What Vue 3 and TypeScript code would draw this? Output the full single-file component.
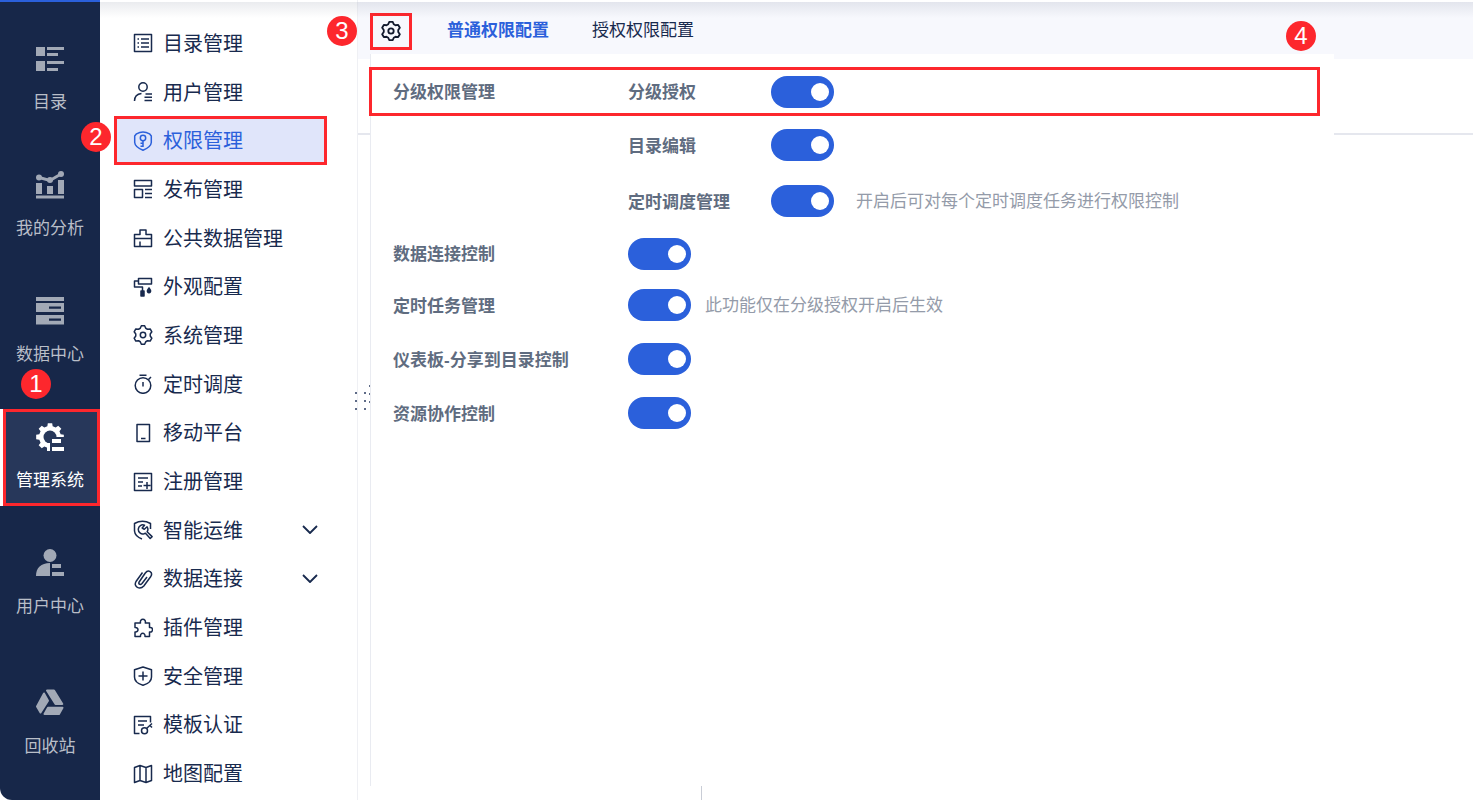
<script setup lang="ts">
import { ref } from 'vue'

interface RailItem {
  label: string
  icon: string
  active?: boolean
  badge?: number
}
interface MenuItem {
  label: string
  icon: string
  active?: boolean
  expandable?: boolean
}
interface Setting {
  id: string
  group: string
  label?: string
  hint?: string
  nested?: boolean
  marked?: boolean
}

/** Closed outline of a cog: every tooth has a flat top and a flat valley. */
function cog(c: number, teeth: number, outer: number, inner: number, top: number, base: number): string {
  const points: string[] = []
  const at = (r: number, deg: number) => {
    const a = ((deg - 90) * Math.PI) / 180
    points.push(`${(c + r * Math.cos(a)).toFixed(2)} ${(c + r * Math.sin(a)).toFixed(2)}`)
  }
  for (let i = 0; i < teeth; i++) {
    const mid = (360 / teeth) * i
    at(inner, mid - base)
    at(outer, mid - top)
    at(outer, mid + top)
    at(inner, mid + base)
  }
  return `M${points.join('L')}Z`
}

const hexCog = cog(10, 6, 9.4, 7.3, 10, 22)
const railCog = cog(14, 8, 14, 11, 9, 14)

const rail: RailItem[] = [
  { label: '目录', icon: 'catalog' },
  { label: '我的分析', icon: 'analysis' },
  { label: '数据中心', icon: 'data' },
  { label: '管理系统', icon: 'system', active: true, badge: 1 },
  { label: '用户中心', icon: 'user' },
  { label: '回收站', icon: 'recycle' },
]

const menu: MenuItem[] = [
  { label: '目录管理', icon: 'list' },
  { label: '用户管理', icon: 'user' },
  { label: '权限管理', icon: 'key', active: true },
  { label: '发布管理', icon: 'publish' },
  { label: '公共数据管理', icon: 'public' },
  { label: '外观配置', icon: 'paint' },
  { label: '系统管理', icon: 'cog' },
  { label: '定时调度', icon: 'timer' },
  { label: '移动平台', icon: 'mobile' },
  { label: '注册管理', icon: 'register' },
  { label: '智能运维', icon: 'ops', expandable: true },
  { label: '数据连接', icon: 'clip', expandable: true },
  { label: '插件管理', icon: 'plugin' },
  { label: '安全管理', icon: 'shield' },
  { label: '模板认证', icon: 'template' },
  { label: '地图配置', icon: 'map' },
]

const settings: Setting[] = [
  { id: 'grade', group: '分级权限管理', label: '分级授权', nested: true, marked: true },
  { id: 'edit', group: '', label: '目录编辑', nested: true },
  { id: 'schedule', group: '', label: '定时调度管理', nested: true, hint: '开启后可对每个定时调度任务进行权限控制' },
  { id: 'connection', group: '数据连接控制' },
  { id: 'task', group: '定时任务管理', hint: '此功能仅在分级授权开启后生效' },
  { id: 'share', group: '仪表板-分享到目录控制' },
  { id: 'collab', group: '资源协作控制' },
]

const enabled = ref<Record<string, boolean>>({
  grade: true,
  edit: true,
  schedule: true,
  connection: true,
  task: true,
  share: true,
  collab: true,
})

const tabs = ['普通权限配置', '授权权限配置']
const currentTab = ref(0)
</script>

<template>
  <div class="page">
    <nav class="rail">
      <a v-for="item in rail" :key="item.label" href="#" class="rail-item" :class="{ active: item.active }">
        <svg class="rail-icon" viewBox="0 0 28 28" fill="currentColor" aria-hidden="true">
          <g v-if="item.icon === 'catalog'">
            <path d="M0 2h9v9H0zM11 2h17v3H11zM11 8h11v3H11zM0 16h9v10H0zM11 16h17v3H11zM11 23h11v3H11z" />
          </g>
          <g v-else-if="item.icon === 'analysis'">
            <path d="M0 12h6v11H0zM11 15h6v8h-6zM22 9h6v14h-6zM0 24.500h28v3H0z" />
            <circle cx="3" cy="6.500" r="3" />
            <circle cx="14" cy="9" r="3" />
            <circle cx="25" cy="3" r="3" />
            <path d="M3 6.500l11 3 11-6.500" fill="none" stroke="currentColor" stroke-width="3" />
          </g>
          <g v-else-if="item.icon === 'data'">
            <path fill-rule="evenodd" d="M0 0h28v4H0zM0 6h28v9H0zM13 9.500v2.200h12V9.500zM0 18h28v9.500H0zM13 21.500v2.200h12v-2.200z" />
          </g>
          <g v-else-if="item.icon === 'system'">
            <path :d="railCog" />
            <circle class="rail-hole" cx="14" cy="14" r="6.500" />
            <path class="rail-hole" d="M14 14h14v14H14z" />
            <path d="M16 16h9v4h-9zM16 24h12v4H16zM11 20h3v8h-3z" />
          </g>
          <g v-else-if="item.icon === 'user'">
            <circle cx="14" cy="6.500" r="6.500" />
            <path d="M14 14v13H0C0 19 5 14 14 14zM16 15h9v4h-9zM16 23h12v4H16z" />
          </g>
          <g v-else stroke="currentColor" stroke-width="2" stroke-linejoin="round">
            <path d="M8 4.500l4 7.200-7.500 11.800L1 17.500z" />
            <path d="M11 1.500h7l8.300 13.500h-6.800z" />
            <path d="M12 18.800h14.500L23 25H8.500z" />
          </g>
        </svg>
        <span>{{ item.label }}</span>
        <b v-if="item.badge" class="badge badge-rail">{{ item.badge }}</b>
      </a>
    </nav>

    <aside class="side">
      <ul class="menu">
        <li v-for="item in menu" :key="item.label" class="menu-row">
          <a href="#" class="menu-item" :class="{ active: item.active }">
            <svg class="menu-icon" viewBox="0 0 20 20" aria-hidden="true">
              <g v-if="item.icon === 'list'">
                <path d="M1.500 1.500h17v17h-17zM8 6h8M8 10h8M8 14h8M4.500 6h1.500M4.500 10h1.500M4.500 14h1.500" />
              </g>
              <g v-else-if="item.icon === 'user'">
                <circle cx="10" cy="5" r="4.200" />
                <path d="M1.500 19c0-4.500 2.500-7 7-7.500M12.500 12H19M11.500 15.300H19M11.500 18.600H19" />
              </g>
              <g v-else-if="item.icon === 'key'">
                <path d="M3.500 2.800Q10-.8 16.500 2.800L18.300 5v6.500Q18 16 10 19.200 2 16 1.700 11.500V5z" />
                <circle cx="10" cy="7" r="2.700" />
                <path d="M10 9.700V16M10 12.300H7.500M10 15.300H7.500" />
              </g>
              <g v-else-if="item.icon === 'publish'">
                <path d="M1.500 1.500h17v5.500h-17zM1.500 10.500h8v8h-8zM12 10.500h7M12 14.500h7M12 18.500h7" />
              </g>
              <g v-else-if="item.icon === 'public'">
                <path d="M1.500 18.500V6.500H7V2h6v4.500h5.500v12zM1.500 10.500h17M7 13.500v5" />
              </g>
              <g v-else-if="item.icon === 'paint'">
                <path d="M5.500 1.500h13V7h-13zM5.500 4H1.500v6h8v4" />
                <path class="solid" d="M8 14h3v5H8zM16 11l1.500 2.500a1.600 1.600 0 1 1-3 0z" />
              </g>
              <g v-else-if="item.icon === 'cog'">
                <path :d="hexCog" />
                <circle cx="10" cy="10" r="2.700" />
              </g>
              <g v-else-if="item.icon === 'timer'">
                <circle cx="10" cy="11.500" r="7.800" />
                <path d="M6.500 1.200h7M10 8v4.500M15.500 5.500l2.500-2.500" />
              </g>
              <g v-else-if="item.icon === 'mobile'">
                <path d="M4 1.500h12.500v17H4zM8 15.500h4.500" />
              </g>
              <g v-else-if="item.icon === 'register'">
                <path d="M1.500 1.500h17v17h-17zM5 6h10M5 10h5M5 14h4M14 10v7M10.500 13.500h7" />
              </g>
              <g v-else-if="item.icon === 'ops'">
                <path d="M17.500 9V3.500Q9.500-1 1.500 3.500V11q.5 5.500 7.500 8" />
                <path d="M11.500 5.200a4.500 4.500 0 1 0-.5 8.500l1.500-.5 4.700 5.300 1.900-1.900-5-4.800a4.500 4.500 0 0 0 0-5L11.300 9.300 9.200 8z" />
              </g>
              <g v-else-if="item.icon === 'clip'">
                <path d="M14 8l-5 6.500c-2 2-4 .5-2.700-1.800l6-8.700c3-4 8-1 5.500 3.500l-7 9.500C7 21 0 18 3 12.500L9.500 3.500" />
              </g>
              <g v-else-if="item.icon === 'plugin'">
                <path d="M2 5h5.500c-1.200-5 6-5 4.800 0h4.200v4.500c4-1 4 5.500 0 4.500v4.500H12c.5-4.200-5-4.200-4.500 0H2v-4.500c4 .5 4-5 0-4.500z" />
              </g>
              <g v-else-if="item.icon === 'shield'">
                <path d="M10 1l8.500 2.800V11c0 4-4 7-8.500 8.300C5.500 18 1.500 15 1.500 11V3.800zM10 5.500v9M5.500 10h9" />
              </g>
              <g v-else-if="item.icon === 'template'">
                <path d="M6.500 18.500h-5v-17h16v6M5 6h9M5 10h6M13.800 13.200L19 8.500M17 10.500l2 2" />
                <circle cx="11.500" cy="15.800" r="3" />
              </g>
              <g v-else>
                <path d="M1.500 3.500l5.500-2 6 2 5.500-2v15l-5.500 2-6-2-5.500 2zM7 1.500v15M13 3.500v15" />
              </g>
            </svg>
            <span>{{ item.label }}</span>
            <svg v-if="item.expandable" class="chevron" viewBox="0 0 16 10" aria-hidden="true">
              <path d="M1 1l7 7 7-7" />
            </svg>
            <b v-if="item.active" class="badge badge-menu">2</b>
          </a>
        </li>
      </ul>
      <svg class="grip" viewBox="0 0 17 26" aria-hidden="true">
        <path d="M1 7h2v2H1zM10 7h2v2h-2zM1 15h2v2H1zM10 15h2v2h-2zM1 23h2v2H1zM10 23h2v2h-2zM15 0h1v2h-1zM15 8h1v2h-1zM15 16h1v2h-1z" />
      </svg>
    </aside>

    <main class="main">
      <div class="backdrop"></div>
      <section class="center">
        <header class="toolbar">
          <button type="button" class="gear" aria-label="设置">
            <svg class="gear-icon" viewBox="0 0 20 20" aria-hidden="true">
              <path :d="hexCog" />
              <circle cx="10" cy="10" r="2.700" />
            </svg>
            <b class="badge badge-gear">3</b>
          </button>
          <button
            v-for="(tab, i) in tabs"
            :key="tab"
            type="button"
            class="tab"
            :class="{ current: i === currentTab }"
            @click="currentTab = i"
          >{{ tab }}</button>
        </header>
        <form class="panel">
          <div
            v-for="s in settings"
            :key="s.id"
            class="setting"
            :class="{ nested: s.nested, marked: s.marked }"
          >
            <span v-if="s.nested" class="name">{{ s.group }}</span>
            <label class="name" :for="s.id">{{ s.label || s.group }}</label>
            <input :id="s.id" v-model="enabled[s.id]" class="switch" type="checkbox" role="switch" />
            <span v-if="s.hint" class="hint">{{ s.hint }}</span>
            <b v-if="s.marked" class="badge badge-row">4</b>
          </div>
        </form>
        <div class="splitter"></div>
      </section>
      <div class="backdrop"></div>
    </main>
  </div>
</template>

<style>
body {
  margin: 0;
  background: #fff;
}
</style>

<style scoped>
.page {
  box-sizing: border-box;
  position: relative;
  display: flex;
  min-height: 100vh;
  font-family: "Liberation Sans", "Noto Sans CJK SC", sans-serif;
  color: #182a4e;
}
.page::after {
  content: "";
  position: absolute;
  top: 2px;
  left: 100px;
  right: 0;
  height: 16px;
  background: linear-gradient(rgba(23, 39, 73, 0.09), rgba(23, 39, 73, 0));
  pointer-events: none;
}
a {
  color: inherit;
  text-decoration: none;
}
button {
  margin: 0;
  border: 0;
  padding: 0;
  background: none;
  font: inherit;
  color: inherit;
  cursor: pointer;
}
.badge {
  position: absolute;
  z-index: 2;
  width: 30px;
  height: 30px;
  border-radius: 50%;
  background: #fd272d;
  color: #fff;
  font-size: 24px;
  font-weight: 400;
  line-height: 30px;
  text-align: center;
}

.rail {
  box-sizing: border-box;
  flex: none;
  display: flex;
  flex-direction: column;
  gap: 29px;
  width: 100px;
  padding: 29px 0 28px;
  border-top: 2px solid #2b60db;
  border-bottom-left-radius: 12px;
  background: #172749;
}
.rail-item {
  box-sizing: border-box;
  position: relative;
  display: flex;
  flex-direction: column;
  align-items: center;
  gap: 16px;
  height: 97px;
  padding-top: 14px;
  color: #a2a9b6;
  font-size: 17px;
  line-height: 28px;
}
.rail-item span {
  color: #b9bec8;
}
.rail-item:last-child {
  margin-top: auto;
}
.rail-item.active {
  border-left: 3px solid #fff;
  padding-right: 3px;
  background: #27375a;
  box-shadow: inset 0 0 0 3px #fd272d;
  color: #fff;
}
.rail-item.active span {
  color: #fff;
}
.rail-icon {
  width: 28px;
  height: 28px;
  overflow: visible;
}
.rail-hole {
  fill: #27375a;
}
.badge-rail {
  top: -40px;
  left: 18px;
}

.side {
  box-sizing: border-box;
  position: relative;
  flex: none;
  display: flex;
  width: 258px;
  padding: 19px 30px 2px 14px;
  border-right: 1px solid #eff0f4;
}
.menu {
  flex: 1;
  display: flex;
  flex-direction: column;
  margin: 0;
  padding: 0;
  list-style: none;
}
.menu-row {
  flex: 1;
  display: flex;
  min-height: 48px;
}
.menu-item {
  position: relative;
  flex: 1;
  display: flex;
  align-items: center;
  gap: 10px;
  padding: 0 9px 0 19px;
  font-size: 20px;
  line-height: 30px;
}
.menu-item span {
  padding-top: 1px;
}
.menu-item.active {
  background: #e0e5fa;
  box-shadow: inset 0 0 0 3px #fd272d;
  color: #2b60db;
}
.menu-icon,
.gear-icon,
.chevron {
  fill: none;
  stroke: currentColor;
  stroke-width: 1.5;
  stroke-linejoin: round;
}
.menu-icon,
.gear-icon {
  width: 20px;
  height: 20px;
}
.gear-icon {
  stroke-width: 1.8;
}
.solid {
  fill: currentColor;
}
.chevron {
  width: 16px;
  height: 10px;
  margin-left: auto;
  stroke-width: 1.8;
}
.badge-menu {
  top: 6px;
  left: -33px;
}
.grip {
  position: absolute;
  z-index: 2;
  top: 385px;
  right: -14px;
  width: 17px;
  height: 26px;
  fill: #5e6b87;
}

.main {
  flex: 1;
  display: grid;
  grid-template-columns: 12px minmax(0, 1fr) 139px;
  margin-top: 2px;
}
.backdrop {
  background: linear-gradient(#f7f8fd, #f7f8fd) 0 0 / 100% 57px no-repeat,
    linear-gradient(#e5e7ee, #e5e7ee) 0 131px / 100% 2px no-repeat;
}
.center {
  display: flex;
  flex-direction: column;
}
.toolbar {
  display: flex;
  align-items: center;
  height: 52px;
  background: #f7f8fd;
  font-size: 17px;
  line-height: 26px;
}
.gear {
  position: relative;
  display: grid;
  place-items: center;
  width: 42px;
  height: 37px;
  margin-top: 6px;
  border: 3px solid #fd272d;
  color: #10182c;
}
.tab {
  margin-left: 43px;
  padding-top: 6px;
}
.gear + .tab {
  margin-left: 35px;
}
.tab.current {
  color: #2b60db;
  font-weight: 700;
}
.badge-gear {
  top: 0;
  left: -46px;
}
.panel {
  flex: 1;
  display: grid;
  grid-template-rows: 49px 58px 54px 51px 52px 56px 52px;
  align-content: start;
  border-left: 1px solid #e9ebf1;
  padding: 13px 14px 0 0;
}
.setting {
  position: relative;
  display: grid;
  grid-template-columns: 235px 63px 1fr;
  align-items: center;
  padding-left: 22px;
  color: #5f6c80;
  font-size: 17px;
  line-height: 26px;
}
.setting.nested {
  grid-template-columns: 235px 143px 63px 1fr;
}
.setting.marked {
  margin-left: -2px;
  padding-left: 24px;
  box-shadow: inset 0 0 0 3px #fd272d;
}
.name {
  padding-top: 3px;
  font-weight: 700;
}
.hint {
  padding-top: 2px;
  padding-left: 14px;
  color: #949ba9;
}
.nested .hint {
  padding-left: 22px;
}
.switch {
  appearance: none;
  box-sizing: border-box;
  display: flex;
  align-items: center;
  width: 63px;
  height: 32px;
  margin: 0;
  border-radius: 16px;
  padding: 0 5px;
  background: #c3c8d2;
  cursor: pointer;
}
.switch::before {
  content: "";
  width: 18px;
  height: 18px;
  border-radius: 50%;
  background: #fff;
}
.switch:checked {
  justify-content: flex-end;
  background: #2b60db;
}
.badge-row {
  top: -46px;
  right: 4px;
}
.splitter {
  box-sizing: border-box;
  width: 332px;
  height: 14px;
  border-right: 1px solid #c9cdd6;
}
</style>
